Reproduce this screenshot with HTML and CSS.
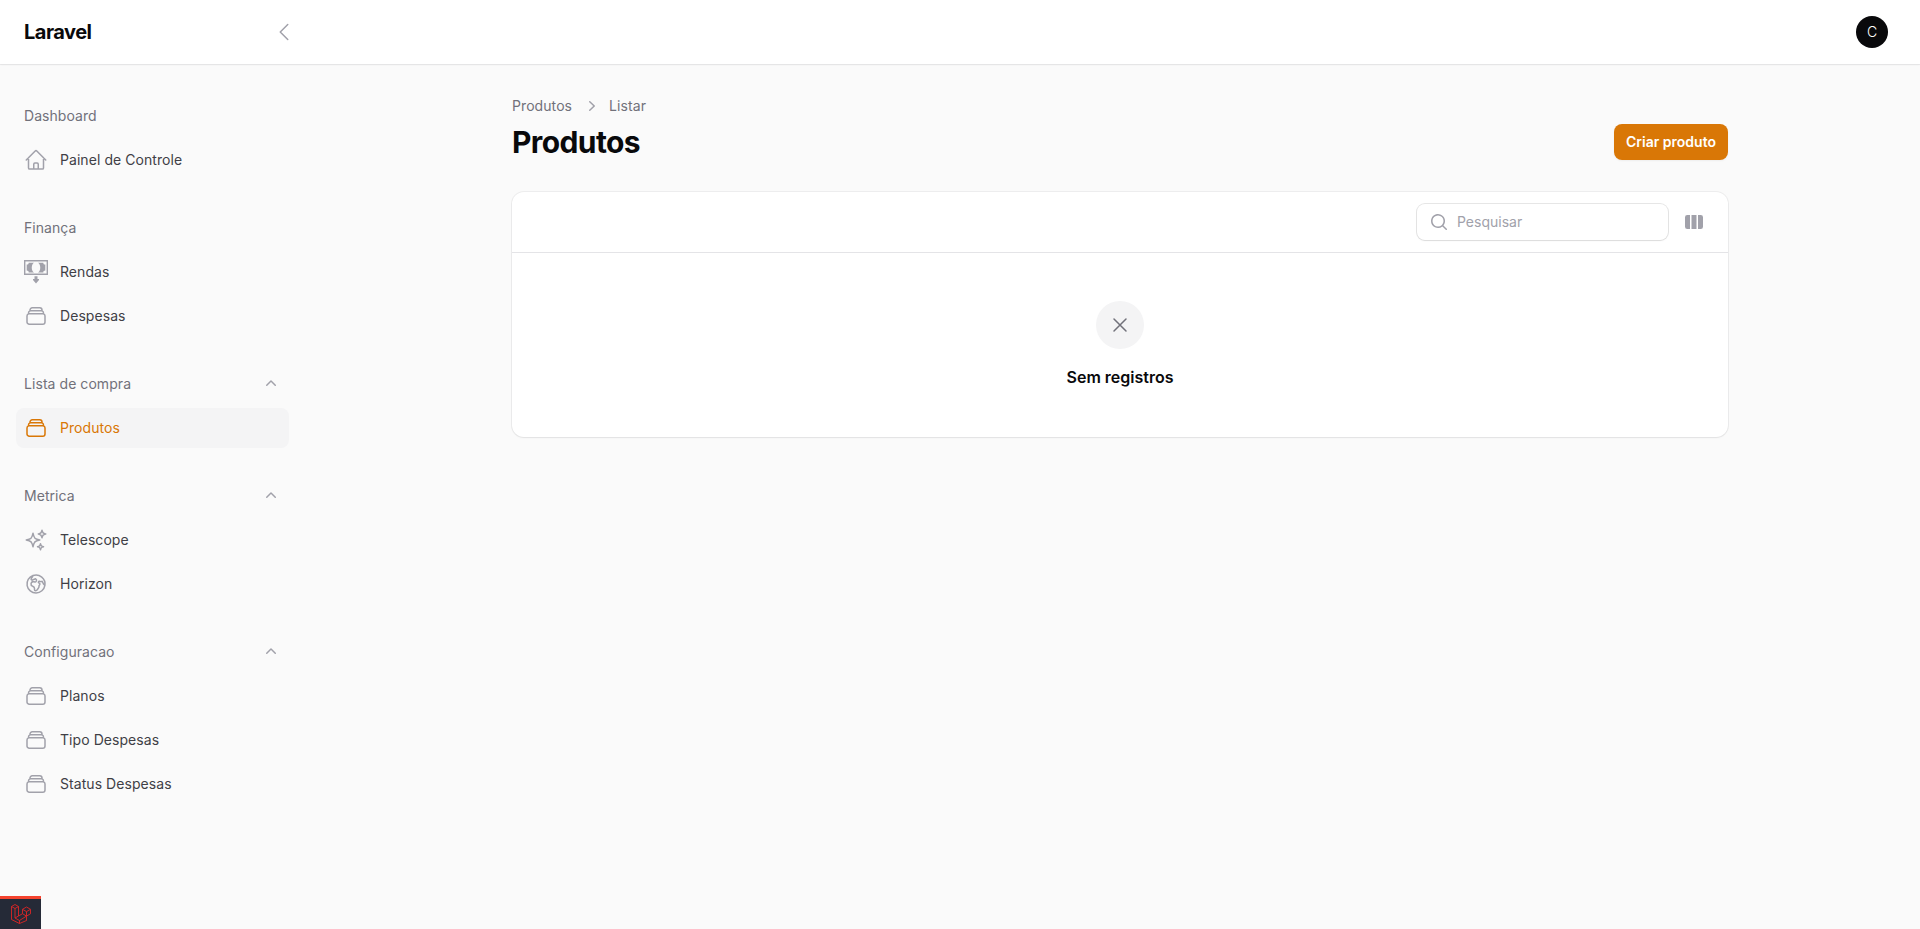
FILE: index.html
```html
<!DOCTYPE html>
<html lang="pt-BR">
<head>
<meta charset="utf-8">
<title>Produtos - Laravel</title>
<link rel="stylesheet" href="styles.css">
</head>
<body>
<svg class="sprite" aria-hidden="true">
  <symbol id="stack" viewBox="0 0 24 24"><path d="M6 6.878V6a2.25 2.25 0 0 1 2.25-2.25h7.5A2.25 2.25 0 0 1 18 6v.878m-12 0c.235-.083.487-.128.75-.128h10.5c.263 0 .515.045.75.128m-12 0A2.25 2.25 0 0 0 4.5 9v.878m13.5-3A2.25 2.25 0 0 1 19.5 9v.878m0 0a2.246 2.246 0 0 0-.75-.128H5.25c-.263 0-.515.045-.75.128m15 0A2.25 2.25 0 0 1 21 12v6a2.25 2.25 0 0 1-2.25 2.25H5.25A2.25 2.25 0 0 1 3 18v-6c0-.98.626-1.813 1.5-2.122"/></symbol>
  <symbol id="up" viewBox="0 0 20 20"><path fill="currentColor" stroke="none" fill-rule="evenodd" d="M9.47 6.47a.75.75 0 0 1 1.06 0l4.25 4.25a.75.75 0 1 1-1.06 1.06L10 8.06l-3.72 3.72a.75.75 0 0 1-1.06-1.06l4.25-4.25Z"/></symbol>
</svg>
<header class="topbar">
  <div class="brand-area">
    <a class="brand">Laravel</a>
    <svg class="icon" viewBox="0 0 24 24"><path d="M15.75 19.5 8.25 12l7.5-7.5"/></svg>
  </div>
  <div class="avatar">C</div>
</header>
<div class="layout">
  <nav class="sidebar">
    <section class="group">
      <div class="group-label">Dashboard</div>
      <a class="item"><svg class="icon" viewBox="0 0 24 24"><path d="m2.25 12 8.954-8.955c.44-.439 1.152-.439 1.591 0L21.75 12M4.5 9.75v10.125c0 .621.504 1.125 1.125 1.125H9.75v-4.875c0-.621.504-1.125 1.125-1.125h2.25c.621 0 1.125.504 1.125 1.125V21h4.125c.621 0 1.125-.504 1.125-1.125V9.75M8.25 21h8.25"/></svg>Painel de Controle</a>
    </section>
    <section class="group">
      <div class="group-label">Finança</div>
      <a class="item"><svg class="icon money" viewBox="0 0 24 24"><path fill-rule="evenodd" d="M0 0h24v15H0zM1.400 1.400v12.200h21.200V1.400z"/><path d="M4.700 2.700H10C7 4.500 7 10.700 10 12.500H4.700C4.700 11.300 4 10.600 2.700 10.600V4.600C4 4.600 4.700 3.900 4.700 2.700zM19.300 2.700H14C17 4.500 17 10.700 14 12.500h5.300C19.300 11.300 20 10.600 21.300 10.600V4.600C20 4.600 19.300 3.900 19.300 2.700zM10.500 16.300h3V19h1.500v1L12 23.500 9 20v-1h1.500z"/></svg>Rendas</a>
      <a class="item"><svg class="icon"><use href="#stack"/></svg>Despesas</a>
    </section>
    <section class="group">
      <div class="group-label">Lista de compra<svg class="chevron"><use href="#up"/></svg></div>
      <a class="item active"><svg class="icon"><use href="#stack"/></svg>Produtos</a>
    </section>
    <section class="group">
      <div class="group-label">Metrica<svg class="chevron"><use href="#up"/></svg></div>
      <a class="item"><svg class="icon" viewBox="0 0 24 24"><path d="M9.813 15.904 9 18.750l-.813-2.846a4.500 4.500 0 0 0-3.090-3.090L2.250 12l2.846-.813a4.500 4.500 0 0 0 3.090-3.090L9 5.250l.813 2.846a4.500 4.500 0 0 0 3.090 3.090L15.750 12l-2.846.813a4.500 4.500 0 0 0-3.090 3.090ZM18.259 8.715 18 9.750l-.259-1.035a3.375 3.375 0 0 0-2.455-2.456L14.250 6l1.036-.259a3.375 3.375 0 0 0 2.455-2.456L18 2.250l.259 1.035a3.375 3.375 0 0 0 2.456 2.456L21.750 6l-1.035.259a3.375 3.375 0 0 0-2.456 2.456ZM16.894 20.567 16.500 21.750l-.394-1.183a2.250 2.250 0 0 0-1.423-1.423L13.500 18.750l1.183-.394a2.250 2.250 0 0 0 1.423-1.423l.394-1.183.394 1.183a2.250 2.250 0 0 0 1.423 1.423l1.183.394-1.183.394a2.250 2.250 0 0 0-1.423 1.423Z"/></svg>Telescope</a>
      <a class="item"><svg class="icon" viewBox="0 0 24 24"><path d="m20.893 13.393-1.135-1.135a2.252 2.252 0 0 1-.421-.585l-1.080-2.160a.414.414 0 0 0-.663-.107.827.827 0 0 1-.812.210l-1.273-.363a.890.890 0 0 0-.738 1.595l.587.390c.590.395.674 1.230.172 1.732l-.200.200c-.212.212-.330.498-.330.796v.410c0 .409-.110.809-.320 1.158l-1.315 2.191a2.110 2.110 0 0 1-1.810 1.025 1.055 1.055 0 0 1-1.055-1.055v-1.172c0-.920-.560-1.747-1.414-2.089l-.655-.261a2.250 2.250 0 0 1-1.383-2.460l.007-.042a2.250 2.250 0 0 1 .290-.787l.090-.150a2.250 2.250 0 0 1 2.370-1.048l1.178.236a1.125 1.125 0 0 0 1.302-.795l.208-.730a1.125 1.125 0 0 0-.578-1.315l-.665-.332-.091.091a2.250 2.250 0 0 1-1.591.659h-.180c-.249 0-.487.100-.662.274a.931.931 0 0 1-1.458-1.137l1.411-2.353a2.250 2.250 0 0 0 .286-.760m11.928 9.869A9 9 0 0 0 8.965 3.525m11.928 9.868A9 9 0 1 1 8.965 3.525"/></svg>Horizon</a>
    </section>
    <section class="group">
      <div class="group-label">Configuracao<svg class="chevron"><use href="#up"/></svg></div>
      <a class="item"><svg class="icon"><use href="#stack"/></svg>Planos</a>
      <a class="item"><svg class="icon"><use href="#stack"/></svg>Tipo Despesas</a>
      <a class="item"><svg class="icon"><use href="#stack"/></svg>Status Despesas</a>
    </section>
  </nav>
  <main class="main">
    <div class="content">
      <div class="page-header">
        <div>
          <div class="breadcrumbs"><span>Produtos</span><svg class="crumb-icon" viewBox="0 0 20 20"><path fill-rule="evenodd" d="M7.210 14.770a.75.75 0 0 1 .020-1.060L11.168 10 7.230 6.290a.75.75 0 1 1 1.040-1.080l4.500 4.250a.75.75 0 0 1 0 1.080l-4.500 4.250a.75.75 0 0 1-1.060-.020Z"/></svg><span>Listar</span></div>
          <h1 class="title">Produtos</h1>
        </div>
        <button class="create">Criar produto</button>
      </div>
      <div class="card">
        <div class="toolbar">
          <div class="search"><svg class="search-icon" viewBox="0 0 20 20"><path fill-rule="evenodd" d="M9 3.500a5.500 5.500 0 1 0 0 11 5.500 5.500 0 0 0 0-11ZM2 9a7 7 0 1 1 12.452 4.391l3.328 3.329a.75.75 0 1 1-1.060 1.060l-3.329-3.328A7 7 0 0 1 2 9Z"/></svg><span>Pesquisar</span></div>
          <svg class="columns" viewBox="0 0 20 20"><path d="M14 17h2.750A2.250 2.250 0 0 0 19 14.750v-9.500A2.250 2.250 0 0 0 16.750 3H14v14ZM12.500 3h-5v14h5V3ZM3.250 3H6v14H3.250A2.250 2.250 0 0 1 1 14.750v-9.500A2.250 2.250 0 0 1 3.250 3Z"/></svg>
        </div>
        <div class="empty">
          <div class="empty-icon"><svg class="icon" viewBox="0 0 24 24"><path d="M6 18 18 6M6 6l12 12"/></svg></div>
          <h4 class="empty-title">Sem registros</h4>
        </div>
      </div>
    </div>
  </main>
</div>
<div class="debugbar">
  <svg class="debug-logo" viewBox="0 0 20 20"><path d="M.5 2.500 4 .5l3.500 2v9.500l4-2.300V5.300l4-2.300 4 2.300v4.500l-4 2.300v4.400L8.500 19.500.5 15.500zM.5 2.500l3.500 2 3.500-2M4 4.500v9.500l4.500 2.500 7-4.400M4 14l3.500-2M11.500 5.300l4 2.300 4-2.300M15.500 7.600v4.500l-4-2.400M8.500 16.500v3"/></svg>
</div>
</body>
</html>
```
FILE: styles.css
```css
* { box-sizing: border-box; margin: 0; }
body { height: 929px; overflow: hidden; background: #fafafa; color: #09090b; font: 14px/20px Inter, sans-serif; }
.sprite { position: absolute; width: 0; height: 0; }
.icon { width: 24px; height: 24px; flex: none; fill: none; stroke: #a1a1aa; stroke-width: 1.5; stroke-linecap: round; stroke-linejoin: round; }
.topbar { position: relative; display: flex; align-items: center; justify-content: space-between; height: 64px; padding: 0 32px 0 24px; background: #fff; box-shadow: 0 0 0 1px rgba(9,9,11,.05), 0 1px 2px rgba(0,0,0,.05); }
.brand-area { display: flex; align-items: center; justify-content: space-between; width: 272px; }
.brand { font-size: 20px; font-weight: 700; letter-spacing: -.5px; }
.avatar { display: grid; place-items: center; width: 32px; height: 32px; border-radius: 50%; background: #09090b; color: #fff; font-size: 14px; font-weight: 300; }
.layout { display: flex; height: 865px; }
.sidebar { display: flex; flex-direction: column; gap: 28px; width: 320px; padding: 32px 31px 32px 16px; font-weight: 440; letter-spacing: .06px; }
.group { display: flex; flex-direction: column; gap: 4px; }
.group-label { display: flex; align-items: center; justify-content: space-between; height: 40px; padding: 8px; color: #71717a; }
.chevron { width: 20px; height: 20px; color: #a1a1aa; }
.item { display: flex; align-items: center; gap: 12px; height: 40px; padding: 8px; border-radius: 8px; color: #3f3f46; }
.money { fill: #a1a1aa; stroke: none; }
.active { background: #f4f4f5; color: #d97706; }
.active .icon { stroke: #d97706; }
.main { flex: 1; padding: 32px; }
.content { width: 1216px; margin: 0 auto; }
.page-header { display: flex; align-items: flex-end; justify-content: space-between; margin-bottom: 32px; }
.breadcrumbs { display: flex; align-items: center; gap: 8px; margin-bottom: 8px; color: #71717a; font-weight: 440; letter-spacing: .08px; }
.crumb-icon { width: 20px; height: 20px; margin: 0 -1px 0 2px; fill: #a1a1aa; }
.title { font-size: 30px; line-height: 36px; font-weight: 700; letter-spacing: -.6px; }
.create { height: 36px; padding: 8px 12px; border: 0; border-radius: 8px; background: #d97706; color: #fff; font: 600 14px/20px Inter, sans-serif; box-shadow: 0 1px 2px rgba(0,0,0,.05); }
.card { border-radius: 12px; background: #fff; box-shadow: 0 0 0 1px rgba(9,9,11,.05), 0 1px 2px rgba(0,0,0,.05); }
.toolbar { display: flex; align-items: center; justify-content: flex-end; gap: 16px; height: 60px; padding: 12px 24px; }
.search { display: flex; align-items: center; gap: 8px; width: 251px; height: 36px; padding: 0 12px; border-radius: 8px; color: #a1a1aa; box-shadow: 0 0 0 1px rgba(9,9,11,.1), 0 1px 2px rgba(0,0,0,.05); }
.search-icon, .columns { width: 20px; height: 20px; fill: #a1a1aa; }
.empty { display: flex; flex-direction: column; align-items: center; padding: 48px 24px; border-top: 1px solid #e4e4e7; }
.empty-icon { display: grid; place-items: center; width: 48px; height: 48px; margin-bottom: 16px; border-radius: 50%; background: #f4f4f5; }
.empty-icon .icon { stroke: #71717a; }
.empty-title { font-size: 16px; line-height: 24px; font-weight: 600; }
.debugbar { position: fixed; left: 0; bottom: 0; display: grid; place-items: center; width: 41px; height: 33px; border-top: 3px solid #f4432e; background: #252a37; }
.debug-logo { width: 20px; height: 20px; fill: none; stroke: #dc2626; stroke-width: .9; }
```
